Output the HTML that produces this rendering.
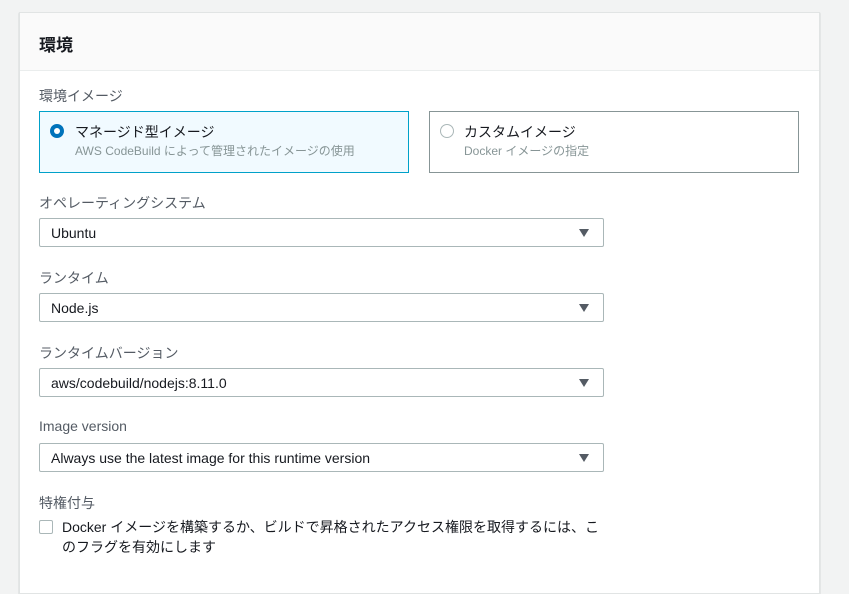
<!DOCTYPE html>
<html><head><meta charset="utf-8"><style>
body{margin:0;width:849px;height:574px;background:#f2f3f3;font-family:"Liberation Sans","Noto Sans CJK JP",sans-serif;color:#16191f;position:relative;overflow:hidden}
.card{position:absolute;left:19px;top:12px;width:799px;height:580px;background:#fff;border:1px solid #e1e4e4;box-shadow:0 1px 1px rgba(0,28,36,.3)}
.hd{position:absolute;left:0;top:0;width:799px;height:57px;background:#fafafa;border-bottom:1px solid #eaeded}
.t{position:absolute;white-space:nowrap}
.lbl{font-size:14px;color:#545b64}
.tile{position:absolute;top:111px;width:370px;height:62px;box-sizing:border-box}
.sel{position:absolute;left:39px;width:565px;height:29px;box-sizing:border-box;border:1px solid #aab7b8;border-radius:2px;background:#fff;font-size:14px}
.sel span{position:absolute;left:11px;top:6px}
.sel i{position:absolute;right:14px;top:10px;width:0;height:0;border-left:5px solid transparent;border-right:5px solid transparent;border-top:8px solid #545b64}
</style></head><body>
<div class="card"><div class="hd"></div></div>
<div class="t" style="left:39px;top:31px;font-size:17px;font-weight:bold">環境</div>
<div class="t lbl" style="left:39px;top:86px">環境イメージ</div>
<div class="tile" style="left:39px;border:1px solid #00a1c9;background:#f1faff"></div>
<div style="position:absolute;left:50px;top:124px;width:14px;height:14px;border-radius:50%;background:#0073bb;box-sizing:border-box;border:4px solid #0073bb"><div style="margin:0 auto;width:6px;height:6px;background:#fff;border-radius:50%"></div></div>
<div class="t" style="left:75px;top:122px;font-size:14px">マネージド型イメージ</div>
<div class="t" style="left:75px;top:142px;font-size:12px;color:#879596">AWS CodeBuild によって管理されたイメージの使用</div>
<div class="tile" style="left:429px;border:1px solid #879596;background:#fff"></div>
<div style="position:absolute;left:440px;top:124px;width:14px;height:14px;border-radius:50%;border:1px solid #aab7b8;box-sizing:border-box"></div>
<div class="t" style="left:464px;top:122px;font-size:14px">カスタムイメージ</div>
<div class="t" style="left:464px;top:142px;font-size:12px;color:#879596">Docker イメージの指定</div>
<div class="t lbl" style="left:39px;top:193px">オペレーティングシステム</div>
<div class="sel" style="top:218px"><span>Ubuntu</span><i></i></div>
<div class="t lbl" style="left:39px;top:268px">ランタイム</div>
<div class="sel" style="top:293px"><span>Node.js</span><i></i></div>
<div class="t lbl" style="left:39px;top:343px">ランタイムバージョン</div>
<div class="sel" style="top:368px"><span>aws/codebuild/nodejs:8.11.0</span><i></i></div>
<div class="t lbl" style="left:39px;top:418px">Image version</div>
<div class="sel" style="top:443px"><span>Always use the latest image for this runtime version</span><i></i></div>
<div class="t lbl" style="left:39px;top:493px">特権付与</div>
<div style="position:absolute;left:39px;top:520px;width:14px;height:14px;border:1px solid #aab7b8;border-radius:2px;box-sizing:border-box"></div>
<div class="t" style="left:62px;top:517px;font-size:14px;line-height:20px">Docker イメージを構築するか、ビルドで昇格されたアクセス権限を取得するには、こ<br>のフラグを有効にします</div>
</body></html>
